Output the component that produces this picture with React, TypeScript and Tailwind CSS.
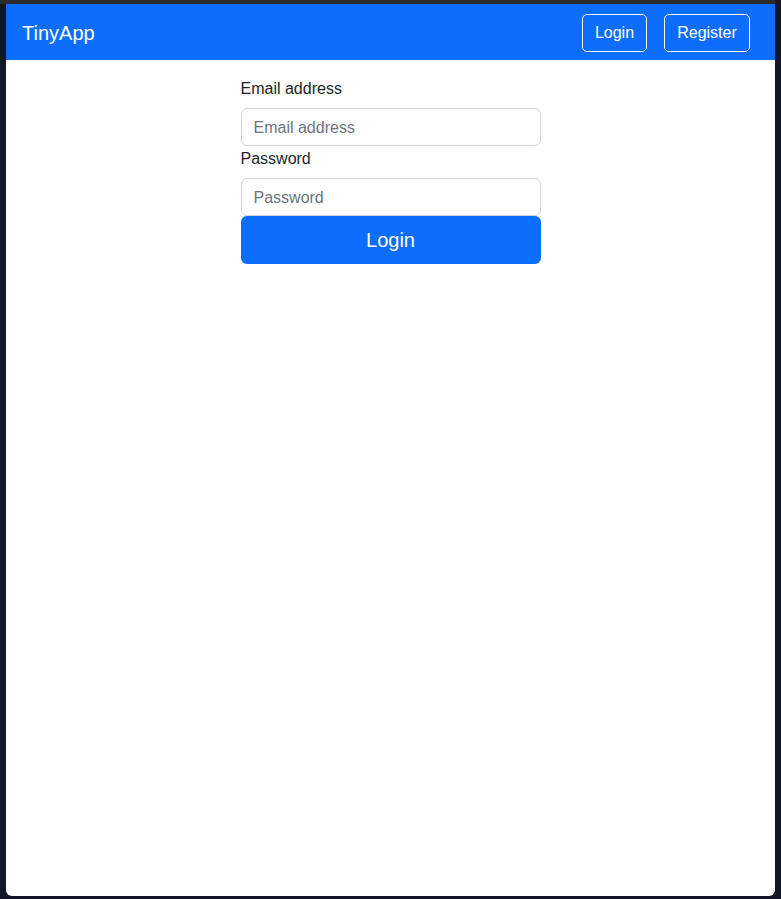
export default function App() {
    return (
        <div
            className="w-[781px] h-[899px] flex flex-col bg-[#111726] overflow-hidden"
            style={{ fontFamily: '"Liberation Sans", Arial, sans-serif' }}
        >
            <div className="h-[4px] mr-[6px] bg-[#2b2b2b] shrink-0" />
            <div className="flex-1 mx-[6px] mb-[3px] bg-white rounded-b-[6px] overflow-hidden flex flex-col">
                {/* navbar */}
                <nav className="h-[56px] shrink-0 bg-[#0d6efd] flex items-center justify-between pl-[16px] pr-[25px]">
                    <a className="text-[20px] text-white leading-none pt-[1px]">TinyApp</a>
                    <div className="flex items-center gap-[17px] pt-[1px]">
                        <button className="h-[38px] w-[65px] border border-white rounded-[5px] text-white text-[16px] pt-[1px]">
                            Login
                        </button>
                        <button className="h-[38px] w-[86px] border border-white rounded-[5px] text-white text-[16px] pt-[1px]">
                            Register
                        </button>
                    </div>
                </nav>

                {/* login form */}
                <form className="w-[300px] mx-auto mt-[17px] flex flex-col text-[#212529]">
                    <label className="text-[16px] leading-[24px] mb-[7px]">Email address</label>
                    <input
                        type="email"
                        placeholder="Email address"
                        className="h-[38px] px-[12px] pt-[1px] border border-[#ced4da] rounded-[6px] text-[16px] placeholder:text-[#6c757d] outline-none"
                    />
                    <label className="text-[16px] leading-[24px] pt-[1px] mb-[7px]">Password</label>
                    <input
                        type="password"
                        placeholder="Password"
                        className="h-[38px] px-[12px] pt-[1px] border border-[#ced4da] rounded-[6px] text-[16px] placeholder:text-[#6c757d] outline-none"
                    />
                    <button
                        type="button"
                        className="h-[48px] bg-[#0d6efd] text-white text-[20px] rounded-[6px]"
                    >
                        Login
                    </button>
                </form>
            </div>
        </div>
    );
}
